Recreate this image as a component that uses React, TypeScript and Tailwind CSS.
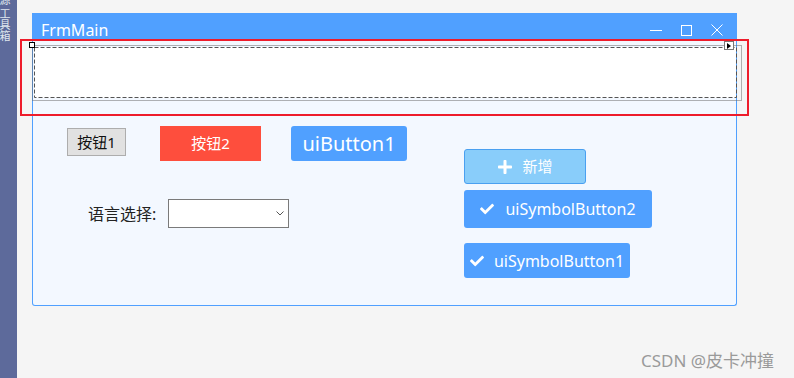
import { FaCheck, FaPlus } from "react-icons/fa";

const TitleButtons = () => (
  <div className="ml-auto flex items-center gap-[19px] pr-[14px]">
    <svg width="12" height="12" viewBox="0 0 12 12">
      <line x1="0" y1="6.5" x2="12" y2="6.5" stroke="white" strokeWidth="1" />
    </svg>
    <svg width="11" height="11" viewBox="0 0 11 11">
      <rect x="0.5" y="0.5" width="10" height="10" fill="none" stroke="white" strokeWidth="1" />
    </svg>
    <svg width="12" height="12" viewBox="0 0 12 12">
      <path d="M0.5 0.5 L11.5 11.5 M11.5 0.5 L0.5 11.5" stroke="white" strokeWidth="1" />
    </svg>
  </div>
);

const SymbolButton = ({ text, className }: { text: string; className: string }) => (
  <div className={"flex items-center justify-center rounded-[3px] bg-[#50a0ff] text-[16px] text-white " + className}>
    <FaCheck size={14} />
    <span>{text}</span>
  </div>
);

export default function App() {
  return (
    <div className="relative flex h-[378px] w-[794px] overflow-hidden bg-[#f5f5f5] font-['Noto_Sans','Noto_Sans_CJK_SC',sans-serif]">
      {/* toolbox tab on the left */}
      <aside className="h-full w-[17px] shrink-0 overflow-hidden bg-[#5d6a9b]">
        <div className="-mt-[6px] -ml-[2px] text-[11px] leading-[12px] text-[#dfe6ee] [writing-mode:vertical-rl]">
          源 工具箱
        </div>
      </aside>

      <main className="flex-1 pl-[15px] pt-[13px]">
        <div className="w-[705px]">
          <div className="flex h-[27px] items-center bg-[#50a0ff] pl-[9px] pt-[7px] text-[16px] text-white">
            <span>FrmMain</span>
            <TitleButtons />
          </div>

          <div className="h-[266px] rounded-b-[3px] border-x border-b border-[#50a0ff] bg-[#f3f8ff] pt-[7px]">
            {/* docked panel, dashed design-time outline */}
            <div className="relative ml-[1px] h-[51px] bg-white">
              <svg className="absolute inset-0" width="703" height="51">
                <rect x="0.5" y="0.5" width="702" height="50" fill="none" stroke="#555" strokeDasharray="4 2" />
              </svg>
            </div>

            <div className="flex pl-[34px] pt-[28px]">
              <div className="flex flex-col">
                <div className="flex items-start">
                  <div className="mt-[2px] flex h-[28px] w-[59px] items-center justify-center border border-[#adadad] bg-[#e1e1e1] text-[15px] text-[#111]">
                    按钮1
                  </div>
                  <div className="ml-[34px] flex h-[35px] w-[101px] items-center justify-center bg-[#fe4e3d] text-[15px] text-white">
                    按钮2
                  </div>
                  <div className="ml-[30px] flex h-[35px] w-[116px] items-center justify-center rounded-[3px] bg-[#50a0ff] text-[20px] text-white">
                    uiButton1
                  </div>
                </div>

                <div className="ml-[21px] mt-[38px] flex h-[29px] items-center gap-[12px] text-[16px] text-[#222]">
                  <span>语言选择:</span>
                  <div className="flex h-[29px] w-[121px] items-center justify-end border border-[#7a7a7a] bg-white pr-[4px]">
                    <svg width="8" height="5" viewBox="0 0 8 5">
                      <path d="M0.5 0.5 L4 4 L7.5 0.5" fill="none" stroke="#555" strokeWidth="1" />
                    </svg>
                  </div>
                </div>
              </div>

              <div className="ml-[57px] mt-[23px] flex flex-col items-start">
                <div className="flex h-[35px] w-[122px] items-center justify-center gap-[9px] rounded-[3px] border border-[#4aa0f0] bg-[#89cdfa] text-[15px] text-white">
                  <FaPlus size={16} />
                  <span>新增</span>
                </div>
                <SymbolButton text="uiSymbolButton2" className="mt-[6px] h-[38px] w-[188px] gap-[11px]" />
                <SymbolButton text="uiSymbolButton1" className="mt-[15px] h-[35px] w-[166px] gap-[10px]" />
              </div>
            </div>
          </div>
        </div>
      </main>

      {/* designer selection overlays */}
      <svg className="pointer-events-none absolute left-[32px] top-[45px]" width="710" height="56">
        <rect x="0.5" y="0.5" width="709" height="55" fill="none" stroke="#666" strokeDasharray="1 1" />
      </svg>
      <div className="absolute left-[29px] top-[42px] h-[6px] w-[6px] border border-black bg-white" />
      <div className="absolute left-[724px] top-[41px] flex h-[9px] w-[10px] items-center justify-center border border-[#777] bg-white">
        <svg width="4" height="6" viewBox="0 0 4 6">
          <path d="M0 0 L4 3 L0 6 Z" fill="black" />
        </svg>
      </div>
      <div className="pointer-events-none absolute left-[20px] top-[39px] h-[77px] w-[729px] border-2 border-[#ee1c2b]" />

      <div className="absolute left-[641px] top-[348px] text-[17px] text-[#9a9a9a]">CSDN @皮卡冲撞</div>
    </div>
  );
}
